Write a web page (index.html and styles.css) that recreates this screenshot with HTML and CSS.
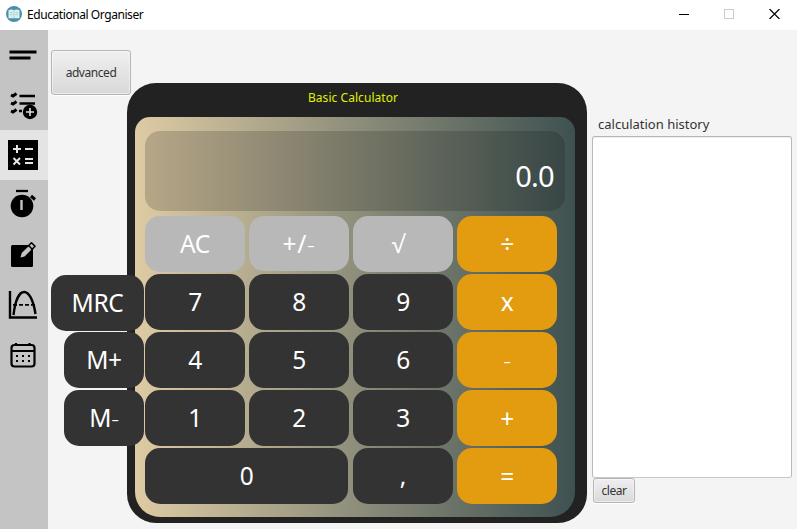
FILE: index.html
```html
<!DOCTYPE html>
<html lang="en">
<head>
<meta charset="utf-8">
<title>Educational Organiser</title>
<link rel="stylesheet" href="styles.css">
</head>
<body>
<header class="titlebar">
  <svg class="logo" width="16" height="16" viewBox="0 0 16 16"><circle cx="8" cy="8" r="8" fill="#4b8fac"/><path d="M2.500 4.200Q5.500 3 8 4.200Q10.500 3 13.500 4.200V12.300H2.500Z" fill="#d9efeb"/><path d="M8 4.500V12M4 6.500h2.500M4 8.500h2.500M9.500 6.500H12M9.500 8.500H12" stroke="#9fcac9" stroke-width=".8"/></svg>
  <h1 class="window-title"><span>Educational Organiser</span></h1>
  <div class="window-controls">
    <svg width="10" height="10"><path d="M0 5.500H10" stroke="#000"/></svg>
    <svg width="10" height="10"><rect x=".5" y=".5" width="9" height="9" fill="none" stroke="#ccc"/></svg>
    <svg width="11" height="10"><path d="M.5 0L10.500 10M10.500 0L.5 10" stroke="#000" stroke-width="1.200"/></svg>
  </div>
</header>
<div class="app">
  <nav class="sidebar">
    <a class="nav-item"><svg width="48" height="50"><path d="M9.500 22H36.500M9.500 28H30.500" stroke="#000" stroke-width="3"/></svg></a>
    <a class="nav-item"><svg width="48" height="50" fill="none" stroke="#000" stroke-width="2"><path stroke-width="3" d="M11 15l2 1 3.500-2.500M11 23l2 1 3.500-2.500M11 31l2 1 3.500-2.500"/><path stroke-width="2.300" d="M19.500 16H35M19.500 23.500H35M19 31H22"/><circle cx="30" cy="32" r="7.200" fill="#000" stroke="none"/><path d="M26 32h8M30 28v8" stroke="#ddd" stroke-width="1.600"/></svg></a>
    <a class="nav-item active"><svg width="48" height="50"><path d="M8 10H38V40H8Z"/><path d="M13 19h8M17 15v8M25 19h8M25 29h8M25 33h8M13.500 28l6.500 6.500M20 28l-6.500 6.500" stroke="#e4e4e4" stroke-width="2"/></svg></a>
    <a class="nav-item"><svg width="48" height="50"><circle cx="22" cy="26" r="11.300"/><path d="M16 11H28" stroke="#000" stroke-width="2.300"/><path d="M31 16l4 3.500" stroke="#000" stroke-width="3"/><path d="M21.500 20v10" stroke="#c4c4c4" stroke-width="2.400"/></svg></a>
    <a class="nav-item"><svg width="48" height="50"><rect x="11" y="15" width="22" height="22" rx="1.500"/><path d="M20.500 27.500l1.200-5L31.500 12.800l3.500 3.400L25.500 26.200Z" fill="#c4c4c4" stroke="#000" stroke-width="1.600" stroke-linejoin="round"/><path d="M28.500 15.500l3.800 3.800" stroke="#000" stroke-width="1.500"/><path d="M20.500 27.500l1.200-4.500 6.300-6 3 3-6.500 6.500Z" fill="#c4c4c4"/></svg></a>
    <a class="nav-item"><svg width="48" height="50" fill="none" stroke="#000" stroke-width="2.400"><path d="M10 11V37.500H37M13.500 35C17 4.500 31 4.500 35.500 34"/><path d="M13 24.800H37" stroke-width="1.800" stroke-dasharray="4 2"/></svg></a>
    <a class="nav-item"><svg width="48" height="50" fill="none" stroke="#000" stroke-width="2.200"><rect x="11.500" y="15" width="23" height="21.500" rx="3"/><path d="M11 21H34.500M16 13v3M29.500 13v3"/><path d="M16 26h14M16 31h14" stroke-width="2" stroke-dasharray="2 4"/></svg></a>
  </nav>
  <main class="content">
    <section class="left-tools">
      <button class="fx-button advanced"><span>advanced</span></button>
      <div class="memory">
        <button class="key wide-memory"><span>MRC</span></button>
        <button class="key"><span>M+</span></button>
        <button class="key"><span>M<b class="minus">-</b></span></button>
      </div>
    </section>
    <section class="calculator">
      <h2 class="calc-title"><span>Basic Calculator</span></h2>
      <div class="panel">
        <output class="display"><span>0.0</span></output>
        <div class="keys">
          <button class="key light"><span>AC</span></button><button class="key light short"><span>+/<b class="minus">-</b></span></button><button class="key light root"><span>√</span></button><button class="key op"><span>÷</span></button>
          <button class="key"><span>7</span></button><button class="key"><span>8</span></button><button class="key"><span>9</span></button><button class="key op"><span>x</span></button>
          <button class="key"><span>4</span></button><button class="key"><span>5</span></button><button class="key"><span>6</span></button><button class="key op"><b class="minus">-</b></button>
          <button class="key"><span>1</span></button><button class="key"><span>2</span></button><button class="key"><span>3</span></button><button class="key op sign"><span>+</span></button>
          <button class="key zero"><span>0</span></button><button class="key"><span>,</span></button><button class="key op sign"><span>=</span></button>
        </div>
      </div>
    </section>
    <aside class="history">
      <h2 class="history-title"><span>calculation history</span></h2>
      <div class="history-list"></div>
      <button class="fx-button clear"><span>clear</span></button>
    </aside>
  </main>
</div>
</body>
</html>
```
FILE: styles.css
```css
* { box-sizing: border-box; }
body {
  margin: 0;
  width: 797px;
  height: 529px;
  overflow: hidden;
  background: #f4f4f4;
  font-family: "Noto Sans", "Open Sans", sans-serif;
}
h1, h2 { margin: 0; font-weight: 400; white-space: nowrap; }
button { font-family: inherit; padding: 0; border: 0; }
svg { display: block; }

.titlebar {
  display: flex;
  align-items: center;
  height: 30px;
  padding: 0 17px 0 6px;
  background: #fff;
}
.logo { margin-top: -2px; }
.window-title { margin-left: 5px; font-size: 12px; line-height: 28px; letter-spacing: -0.43px; }
.window-controls { display: flex; gap: 35px; margin: -2px 0 0 auto; }

.app { display: flex; height: 499px; }
.sidebar { width: 48px; background: #c4c4c4; }
.nav-item { display: block; height: 50px; }
.nav-item.active { background: #e4e4e4; }

.content { display: flex; flex: 1; padding-left: 3px; }
.left-tools { width: 93px; padding-top: 20px; }
.fx-button {
  display: block;
  border: 1px solid #b5b5b5;
  border-radius: 3px;
  background: linear-gradient(#efefef, #d9d9d9);
  box-shadow: inset 0 0 0 1px rgba(255, 255, 255, .45), 0 1px 0 #fff;
  color: #333;
  font-size: 12px;
  letter-spacing: -0.45px;
}
.advanced { width: 80px; height: 45px; }
.memory {
  position: relative;
  z-index: 1;
  display: flex;
  flex-direction: column;
  align-items: flex-end;
  gap: 2px;
  margin-top: 180px;
}
.memory .key { width: 80px; padding-bottom: 1px; }
.memory .wide-memory { width: 93px; margin-bottom: -1px; }

.calculator {
  width: 460px;
  height: 440px;
  margin: 53px 0 0 -17px;
  padding: 0 12px 0 8px;
  border-radius: 29px;
  background: #222;
}
.calc-title {
  height: 34px;
  padding: 5px 4px 0 0;
  color: #e0f000;
  font-size: 12px;
  line-height: 20px;
  letter-spacing: 0.05px;
  text-align: center;
}
.panel {
  height: 400px;
  padding: 14px 10px 0;
  border-radius: 15px 15px 25px 25px;
  background: linear-gradient(90deg, #decba4, #3e5151);
}
.display {
  display: flex;
  align-items: center;
  justify-content: flex-end;
  height: 80px;
  padding: 9px 11px 0 0;
  border-radius: 15px;
  background: linear-gradient(90deg, rgba(0, 0, 0, .17), rgba(0, 0, 0, .16));
  color: #fff;
  font-size: 29px;
  letter-spacing: -0.7px;
}
.keys { display: grid; grid-template-columns: repeat(4, 100px); gap: 2px 4px; margin-top: 5px; }
.key {
  display: flex;
  align-items: center;
  justify-content: center;
  width: 100%;
  height: 56px;
  padding-bottom: 1px;
  border-radius: 15px;
  background: #333;
  color: #fff;
  font-size: 24.5px;
  letter-spacing: -0.3px;
}
.sign { padding-top: 2px; }
.light { background: #b8b8b8; }
.light.short { height: 55px; letter-spacing: 0.6px; }
.root { padding-right: 10px; }
.op { background: #e39b10; }
.zero { grid-column: span 2; width: 203px; }
.minus { font-family: "Open Sans", "Noto Sans", sans-serif; font-weight: 300; }

.history { width: 200px; margin-left: 5px; padding-top: 84px; }
.history-title { padding-left: 6px; color: #333; font-size: 13px; line-height: 20px; height: 22px; letter-spacing: 0; }
.history-list {
  height: 342px;
  border: 1px solid #b8b8b8;
  border-color: #b5b5b5 #bbb #c8c8c8;
  border-radius: 3px;
  background: #fff;
  box-shadow: inset 0 1px 1px #eee;
}
.clear { width: 42px; height: 25px; margin-left: 1px; }
```
